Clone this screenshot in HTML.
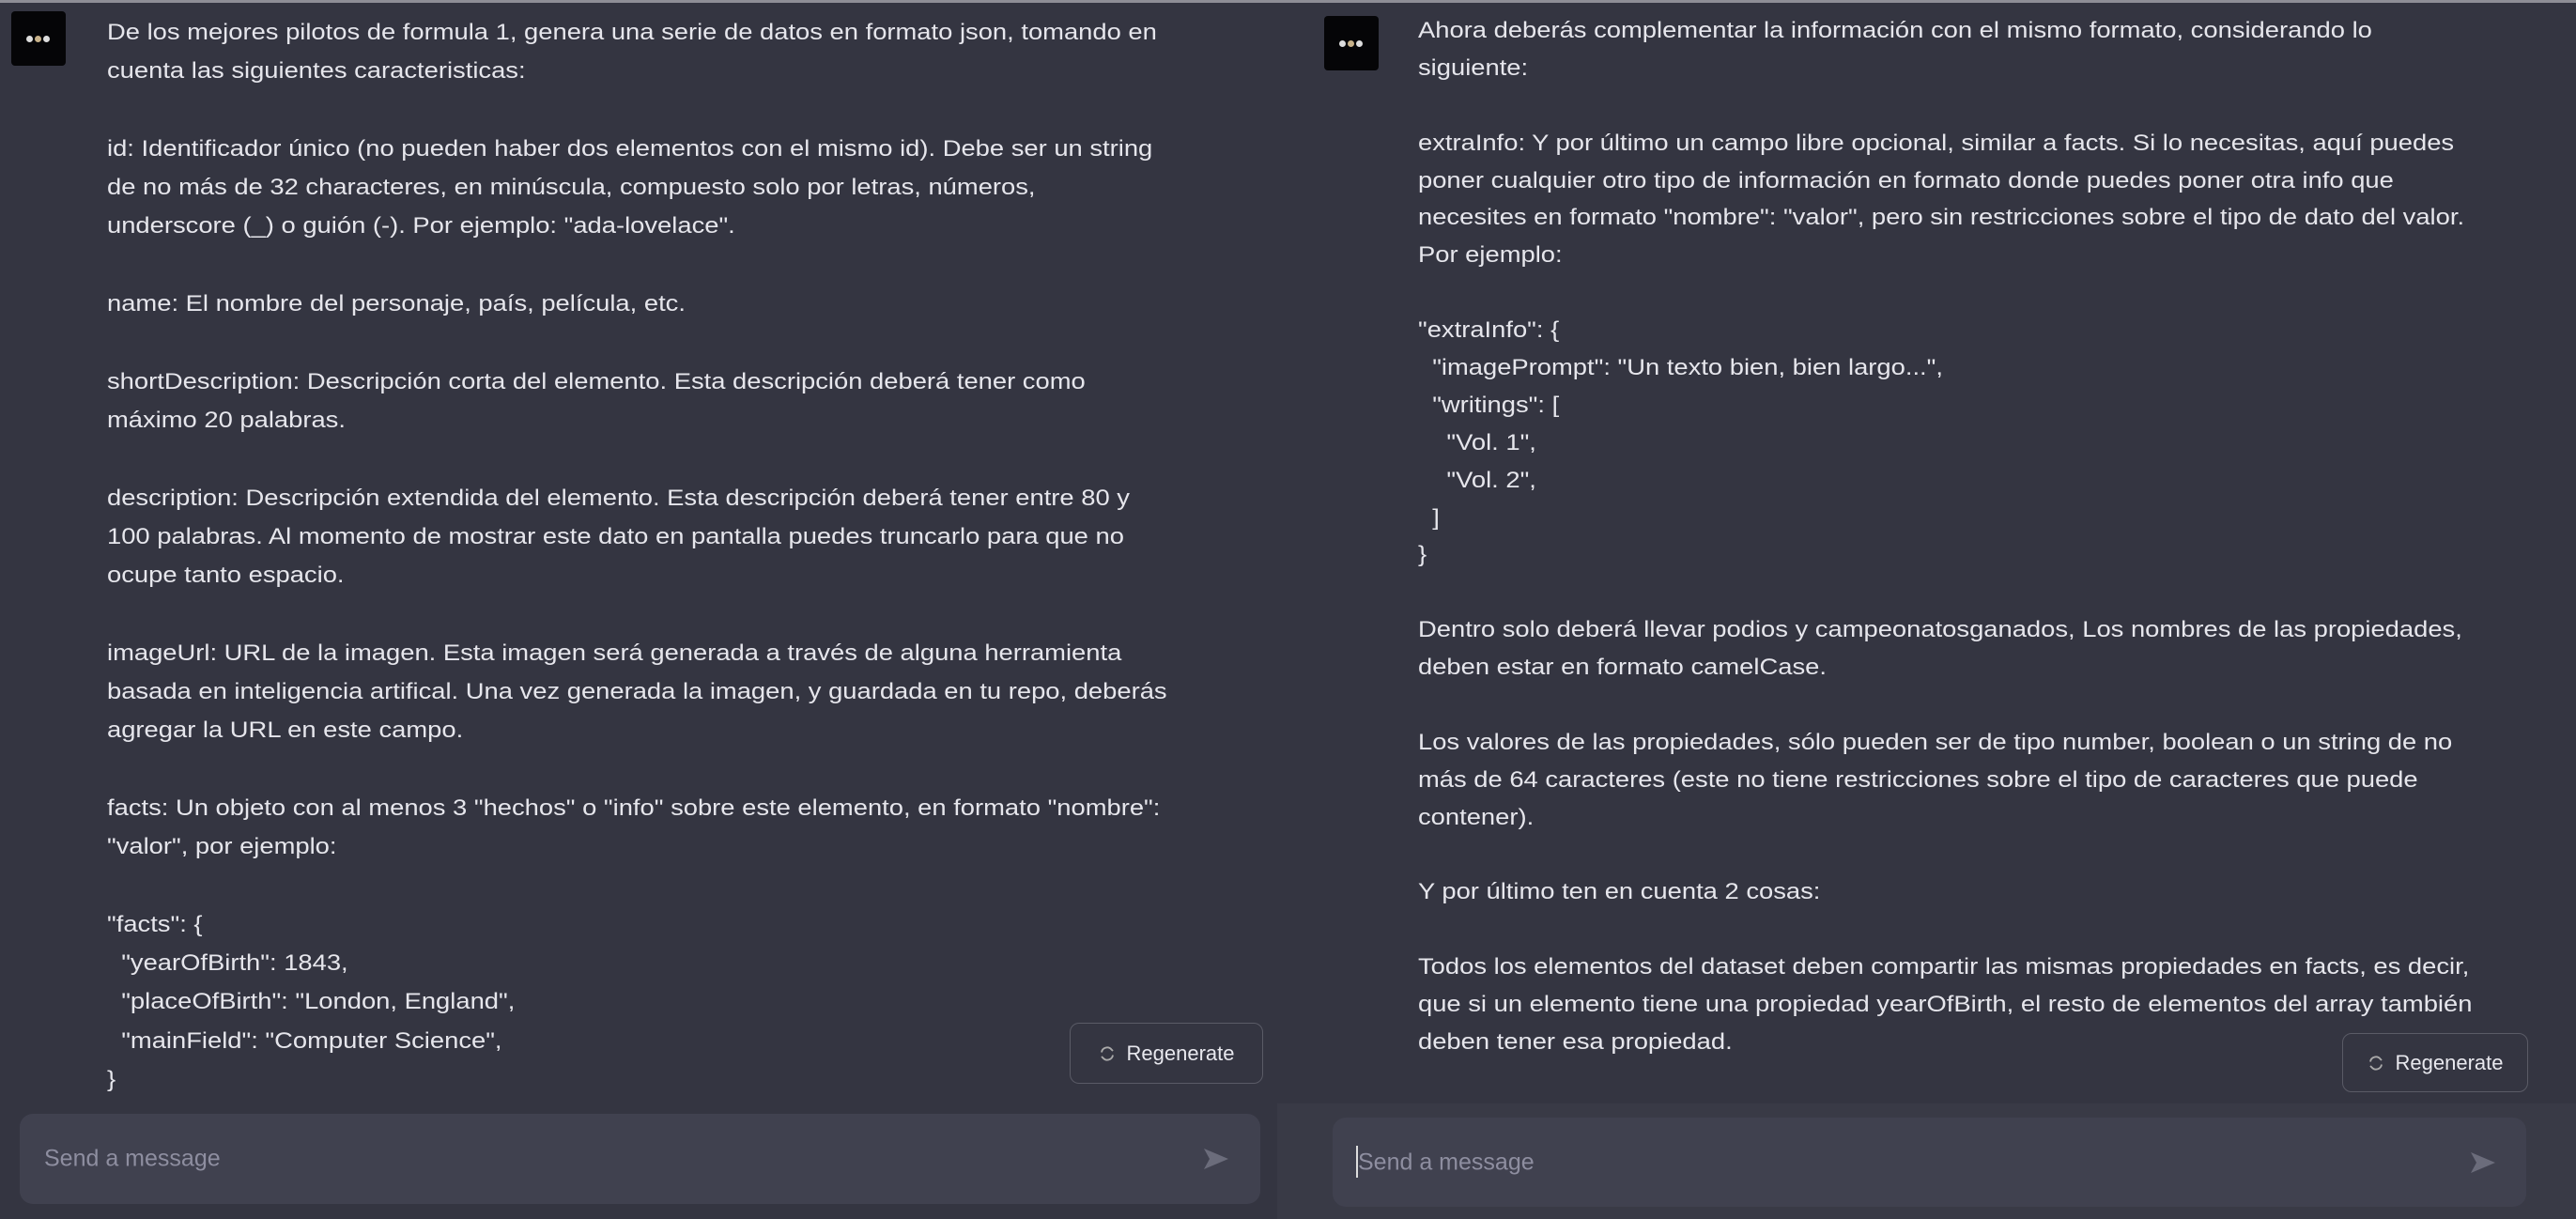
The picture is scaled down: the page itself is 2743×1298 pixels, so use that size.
<!DOCTYPE html>
<html><head><meta charset="utf-8"><style>
*{margin:0;padding:0;box-sizing:border-box}
html,body{width:2743px;height:1298px;overflow:hidden}
body{background:#343541;position:relative;font-family:"Liberation Sans",sans-serif;color:#e6e6ec}
.topline{position:absolute;left:0;top:0;width:2743px;height:3px;background:#8e8e96}
.av{position:absolute;width:58px;height:58px;background:#050507;border-radius:4px}
.av i{position:absolute;top:26px;width:7px;height:7px;border-radius:50%}
.txt{position:absolute;font-size:24px;transform:scaleX(1.14);transform-origin:0 0}
.txt div{height:41.3px;line-height:41.3px;white-space:pre}
.r div{height:39.9px;line-height:39.9px}
.regen{position:absolute;border:1.5px solid #5a5b66;border-radius:10px;background:#343541;color:#e8e8ee;font-size:22px;display:flex;align-items:center;justify-content:center;gap:12px}
.input{position:absolute;background:#40414f;border-radius:14px}
.ph{position:absolute;font-size:25px;color:#8e8ea0;top:50%;transform:translateY(-50%)}
.send{position:absolute;top:50%;transform:translateY(-50%)}
</style></head><body>
<div class="topline"></div>
<div style="position:absolute;left:1360px;top:1175px;width:1383px;height:123px;background:#393a46"></div>

<div class="av" style="left:12px;top:12px"><i style="left:16px;background:#ddd"></i><i style="left:25px;background:#c8b28a"></i><i style="left:34px;background:#ddd"></i></div>
<div class="av" style="left:1410px;top:17px"><i style="left:16px;background:#ddd"></i><i style="left:25px;background:#c8b28a"></i><i style="left:34px;background:#ddd"></i></div>

<div class="txt" style="left:114px;top:14px">
<div>De los mejores pilotos de formula 1, genera una serie de datos en formato json, tomando en</div>
<div>cuenta las siguientes caracteristicas:</div>
<div></div>
<div>id: Identificador único (no pueden haber dos elementos con el mismo id). Debe ser un string</div>
<div>de no más de 32 characteres, en minúscula, compuesto solo por letras, números,</div>
<div>underscore (_) o guión (-). Por ejemplo: "ada-lovelace".</div>
<div></div>
<div>name: El nombre del personaje, país, película, etc.</div>
<div></div>
<div>shortDescription: Descripción corta del elemento. Esta descripción deberá tener como</div>
<div>máximo 20 palabras.</div>
<div></div>
<div>description: Descripción extendida del elemento. Esta descripción deberá tener entre 80 y</div>
<div>100 palabras. Al momento de mostrar este dato en pantalla puedes truncarlo para que no</div>
<div>ocupe tanto espacio.</div>
<div></div>
<div>imageUrl: URL de la imagen. Esta imagen será generada a través de alguna herramienta</div>
<div>basada en inteligencia artifical. Una vez generada la imagen, y guardada en tu repo, deberás</div>
<div>agregar la URL en este campo.</div>
<div></div>
<div>facts: Un objeto con al menos 3 "hechos" o "info" sobre este elemento, en formato "nombre":</div>
<div>"valor", por ejemplo:</div>
<div></div>
<div>"facts": {</div>
<div>  "yearOfBirth": 1843,</div>
<div>  "placeOfBirth": "London, England",</div>
<div>  "mainField": "Computer Science",</div>
<div>}</div>
</div>

<div class="txt r" style="left:1510px;top:13px">
<div>Ahora deberás complementar la información con el mismo formato, considerando lo</div>
<div>siguiente:</div>
<div></div>
<div>extraInfo: Y por último un campo libre opcional, similar a facts. Si lo necesitas, aquí puedes</div>
<div>poner cualquier otro tipo de información en formato donde puedes poner otra info que</div>
<div>necesites en formato "nombre": "valor", pero sin restricciones sobre el tipo de dato del valor.</div>
<div>Por ejemplo:</div>
<div></div>
<div>"extraInfo": {</div>
<div>  "imagePrompt": "Un texto bien, bien largo...",</div>
<div>  "writings": [</div>
<div>    "Vol. 1",</div>
<div>    "Vol. 2",</div>
<div>  ]</div>
<div>}</div>
<div></div>
<div>Dentro solo deberá llevar podios y campeonatosganados, Los nombres de las propiedades,</div>
<div>deben estar en formato camelCase.</div>
<div></div>
<div>Los valores de las propiedades, sólo pueden ser de tipo number, boolean o un string de no</div>
<div>más de 64 caracteres (este no tiene restricciones sobre el tipo de caracteres que puede</div>
<div>contener).</div>
<div></div>
<div>Y por último ten en cuenta 2 cosas:</div>
<div></div>
<div>Todos los elementos del dataset deben compartir las mismas propiedades en facts, es decir,</div>
<div>que si un elemento tiene una propiedad yearOfBirth, el resto de elementos del array también</div>
<div>deben tener esa propiedad.</div>
</div>

<div class="regen" style="left:1139px;top:1089px;width:206px;height:65px">
<svg width="18" height="18" viewBox="0 0 24 24" fill="none" stroke="#aaa" stroke-width="2.5"><path d="M4 10a8 8 0 0 1 14-4l2 2M20 14a8 8 0 0 1-14 4l-2-2"/></svg><span>Regenerate</span></div>
<div class="regen" style="left:2494px;top:1100px;width:198px;height:63px">
<svg width="18" height="18" viewBox="0 0 24 24" fill="none" stroke="#aaa" stroke-width="2.5"><path d="M4 10a8 8 0 0 1 14-4l2 2M20 14a8 8 0 0 1-14 4l-2-2"/></svg><span>Regenerate</span></div>

<div class="input" style="left:21px;top:1186px;width:1321px;height:96px">
<div class="ph" style="left:26px">Send a message</div>
<svg class="send" style="left:1259px" width="30" height="26" viewBox="0 0 30 26"><path d="M2 2L28 13L2 24L8 13Z" fill="#6b6c7b"/></svg>
</div>
<div class="input" style="left:1419px;top:1190px;width:1271px;height:95px">
<div style="position:absolute;left:25px;top:30px;width:2px;height:34px;background:#ddd"></div>
<div class="ph" style="left:27px">Send a message</div>
<svg class="send" style="left:1210px" width="30" height="26" viewBox="0 0 30 26"><path d="M2 2L28 13L2 24L8 13Z" fill="#6b6c7b"/></svg>
</div>
</body></html>
